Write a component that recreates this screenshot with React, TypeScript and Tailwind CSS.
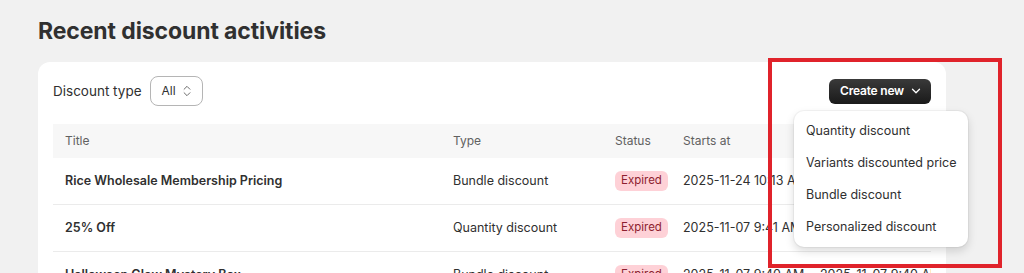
import React from 'react';
import { ChevronDown, ChevronsUpDown } from 'lucide-react';

const rows = [
  { title: 'Rice Wholesale Membership Pricing', type: 'Bundle discount', starts: '2025-11-24 10:13 AM', ends: '2025-11-24 10:13 AM' },
  { title: '25% Off', type: 'Quantity discount', starts: '2025-11-07 9:41 AM', ends: '2025-11-07 9:41 AM' },
  { title: 'Halloween Glow Mystery Box', type: 'Bundle discount', starts: '2025-11-07 9:40 AM', ends: '2025-11-07 9:40 AM' },
];

const menuItems = ['Quantity discount', 'Variants discounted price', 'Bundle discount', 'Personalized discount'];

const App = () => {
  return (
    <div className="relative min-h-screen overflow-hidden bg-[#f1f1f1] px-[38px] pt-[15px] font-['Inter',sans-serif] text-[#303030]">
      <h1 className="text-[23px] font-bold leading-8 tracking-[-0.1px]">Recent discount activities</h1>

      {/* Card */}
      <div className="mt-[15px] w-[908px] rounded-xl bg-white px-[15px] pt-[14px] shadow-[0_1px_0_rgba(0,0,0,0.05)]">
        <div className="flex items-center justify-between">
          <div className="flex items-center gap-[8px]">
            <span className="text-[13.5px]">Discount type</span>
            <button className="flex h-[30px] items-center gap-1 rounded-lg border border-[#b5b5b5] pl-[11px] pr-[8px] text-[12px]">
              All
              <ChevronsUpDown className="h-3.5 w-3.5 text-[#616161]" strokeWidth={1.6} />
            </button>
          </div>
          <button className="flex h-[25px] items-center gap-[5px] rounded-md bg-gradient-to-b from-[#3a3a3a] to-[#1a1a1a] pl-[11px] pr-[8px] text-[12px] font-semibold tracking-[-0.2px] text-white">
            Create new
            <ChevronDown className="h-3.5 w-3.5" strokeWidth={2.2} />
          </button>
        </div>

        {/* Table */}
        <div className="mt-[18px] overflow-hidden">
          <div className="grid h-[34px] w-[960px] grid-cols-[388px_162px_68px_137px_1fr] items-center bg-[#f7f7f7] pl-3 text-[12px] text-[#616161]">
            <span>Title</span>
            <span>Type</span>
            <span>Status</span>
            <span>Starts at</span>
            <span>Ends at</span>
          </div>
          {rows.map((r) => (
            <div
              key={r.title}
              className="grid h-[47px] w-[960px] grid-cols-[388px_162px_68px_137px_1fr] items-center border-b border-[#ebebeb] pl-3 text-[12.5px]"
            >
              <span className="font-semibold">{r.title}</span>
              <span>{r.type}</span>
              <span>
                <span className="inline-flex h-5 items-center rounded-md bg-[#fed1d7] px-[6px] text-[11.5px] text-[#8e1f30]">Expired</span>
              </span>
              <span>{r.starts}</span>
              <span>{r.ends}</span>
            </div>
          ))}
        </div>
      </div>

      {/* Dropdown menu */}
      <div className="absolute left-[794px] top-[111px] w-[174px] rounded-[10px] bg-white py-1 shadow-[0_4px_10px_rgba(0,0,0,0.15),0_0_0_1px_rgba(0,0,0,0.04)]">
        {menuItems.map((item) => (
          <div key={item} className="flex h-8 items-center whitespace-nowrap px-3 text-[12.5px]">
            {item}
          </div>
        ))}
      </div>

      {/* Red highlight box */}
      <div className="pointer-events-none absolute left-[768px] top-[58px] h-[210px] w-[234px] border-4 border-[#e0232b]" />
    </div>
  );
};

export default App;
